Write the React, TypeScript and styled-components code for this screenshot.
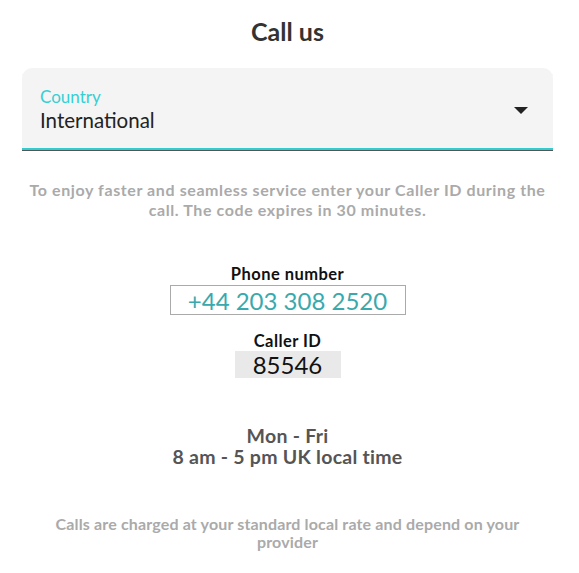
import React from 'react';
import styled, { createGlobalStyle } from 'styled-components';

const GlobalStyle = createGlobalStyle`
    html, body {
        margin: 0;
        padding: 0;
        background: #ffffff;
    }
    body {
        font-family: "Lato", "Noto Sans", sans-serif;
    }
`;

export default function App() {
    return (
        <Page>
            <GlobalStyle />
            <Title>Call us</Title>
            <SelectField>
                <SelectText>
                    <FieldLabel>Country</FieldLabel>
                    <FieldValue>International</FieldValue>
                </SelectText>
                <Arrow viewBox="0 0 14 7">
                    <path d="M0 0h14L7 7z" fill="#222" />
                </Arrow>
            </SelectField>
            <Hint>
                To enjoy faster and seamless service enter your Caller ID during the call. The code expires in 30 minutes.
            </Hint>
            <Details>
                <DetailLabel>Phone number</DetailLabel>
                <PhoneBox>+44 203 308 2520</PhoneBox>
                <DetailLabel $gap>Caller ID</DetailLabel>
                <CodeBox>85546</CodeBox>
            </Details>
            <Hours>
                Mon - Fri
                <br />
                8 am - 5 pm UK local time
            </Hours>
            <Footnote>Calls are charged at your standard local rate and depend on your provider</Footnote>
        </Page>
    );
}

const Page = styled.main`
    width: 579px;
    box-sizing: border-box;
    padding: 16px 26px 0 22px;
    display: flex;
    flex-direction: column;
    align-items: stretch;
`;

const Title = styled.h1`
    margin: 0;
    text-align: center;
    font-size: 25px;
    line-height: 30px;
    font-weight: 700;
    color: #333333;
`;

const SelectField = styled.div`
    margin-top: 22px;
    height: 83px;
    box-sizing: border-box;
    background: #f4f4f4;
    border-radius: 10px 10px 0 0;
    border-bottom: 1px solid #555;
    box-shadow: inset 0 -2px 0 #30cdd0;
    display: flex;
    align-items: center;
    justify-content: space-between;
    padding: 1px 25px 0 18px;
`;

const SelectText = styled.div`
    display: flex;
    flex-direction: column;
`;

const FieldLabel = styled.span`
    font-size: 17px;
    line-height: 21px;
    color: #35cfd4;
`;

const FieldValue = styled.span`
    font-size: 20.5px;
    line-height: 26px;
    color: #222222;
`;

const Arrow = styled.svg`
    width: 14px;
    height: 7px;
    margin-top: 2px;
`;

const Hint = styled.p`
    margin: 29px 0 0;
    padding: 0;
    text-align: center;
    font-size: 16px;
    letter-spacing: 0.6px;
    line-height: 20px;
    font-weight: 700;
    color: #aaaaaa;
`;

const Details = styled.section`
    margin-top: 44px;
    display: flex;
    flex-direction: column;
    align-items: center;
`;

const DetailLabel = styled.div<{ $gap?: boolean }>`
    margin-top: ${p => (p.$gap ? '16px' : '0')};
    font-size: 16.5px;
    letter-spacing: 0.45px;
    line-height: 20px;
    font-weight: 700;
    color: #111111;
`;

const PhoneBox = styled.div`
    margin-top: 1px;
    width: 236px;
    height: 30px;
    box-sizing: border-box;
    border: 1px solid #aaaaaa;
    display: flex;
    align-items: center;
    justify-content: center;
    font-size: 24px;
    color: #3aa9ad;
`;

const CodeBox = styled.div`
    width: 106px;
    height: 27px;
    background: #e9e9e9;
    display: flex;
    align-items: center;
    justify-content: center;
    font-size: 24px;
    color: #111111;
`;

const Hours = styled.p`
    margin: 47px 0 0;
    text-align: center;
    font-size: 19.5px;
    letter-spacing: 0.25px;
    line-height: 21px;
    font-weight: 700;
    color: #555555;
`;

const Footnote = styled.p`
    margin: 48px 0 0;
    padding: 0 28px;
    text-align: center;
    font-size: 16px;
    letter-spacing: 0.15px;
    line-height: 18px;
    font-weight: 700;
    color: #aaaaaa;
`;
